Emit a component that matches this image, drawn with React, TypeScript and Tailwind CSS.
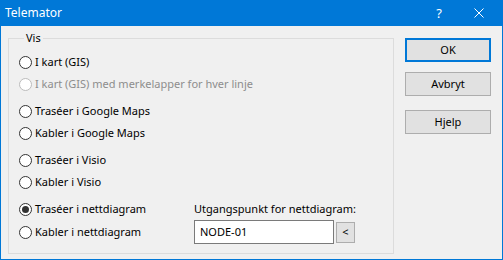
import React from "react";

// radio choices in the "Vis" group, two per block
const groups = [
  [{ label: "I kart (GIS)" }, { label: "I kart (GIS) med merkelapper for hver linje", disabled: true }],
  [{ label: "Traséer i Google Maps" }, { label: "Kabler i Google Maps" }],
  [{ label: "Traséer i Visio" }, { label: "Kabler i Visio" }],
];

function Radio({
  label,
  checked = false,
  disabled = false,
}: {
  label: string;
  checked?: boolean;
  disabled?: boolean;
}) {
  return (
    <div className="flex h-[22px] items-center gap-[3px]">
      <span
        className={`flex h-[13px] w-[13px] shrink-0 items-center justify-center rounded-full border bg-white ${
          disabled ? "border-[#bcbcbc]" : "border-[#333333]"
        }`}
      >
        {checked && <span className="h-[7px] w-[7px] rounded-full bg-[#333333]" />}
      </span>
      <span className={`whitespace-nowrap ${disabled ? "text-[#8d8d8d]" : "text-black"}`}>{label}</span>
    </div>
  );
}

function DialogButton({ label, primary = false }: { label: string; primary?: boolean }) {
  return (
    <button
      className={`flex h-[24px] w-[86px] items-center justify-center bg-[#e1e1e1] text-black ${
        primary ? "border-2 border-[#0078d7]" : "border border-[#adadad]"
      }`}
    >
      {label}
    </button>
  );
}

export default function App() {
  return (
    <div
      className="flex h-[260px] w-[503px] flex-col bg-[#0078d7] px-px pb-px text-[11px] leading-[16px]"
      style={{ fontFamily: '"Noto Sans", "Open Sans", sans-serif' }}
    >
      {/* Title bar */}
      <div className="flex h-[26px] items-center text-[12px] text-white">
        <span className="ml-[4px]">Telemator</span>
        <span className="ml-auto mr-[32px] text-[13px]">?</span>
        <svg width="10" height="10" viewBox="0 0 10 10" className="mr-[18px]">
          <path d="M0.5 0.5 L9.5 9.5 M9.5 0.5 L0.5 9.5" stroke="white" strokeWidth="1" />
        </svg>
      </div>

      {/* Body */}
      <div className="flex flex-1 gap-[11px] bg-[#f0f0f0] pl-[7px]">
        <fieldset className="mt-[4px] h-[224px] w-[386px] border border-[#dcdcdc] pl-[10px] pt-[5px]">
          <legend className="ml-[5px] px-[2px] text-black">Vis</legend>
          <div className="flex flex-col gap-[5px]">
            {groups.map((pair, i) => (
              <div key={i} className="flex flex-col">
                {pair.map((o) => (
                  <Radio key={o.label} label={o.label} disabled={"disabled" in o && o.disabled} />
                ))}
              </div>
            ))}

            <div className="flex">
              <div className="flex w-[175px] flex-col gap-[1px]">
                <Radio label="Traséer i nettdiagram" checked />
                <Radio label="Kabler i nettdiagram" />
              </div>
              <div className="flex flex-col">
                <div className="flex h-[22px] items-center whitespace-nowrap text-black">
                  Utgangspunkt for nettdiagram:
                </div>
                <div className="flex items-center gap-[2px]">
                  <div className="flex h-[24px] w-[140px] items-center border border-[#7a7a7a] bg-white pl-[5px] text-black">
                    NODE-01
                  </div>
                  <button className="flex h-[21px] w-[19px] items-center justify-center border border-[#adadad] bg-[#e1e1e1] text-black">
                    &lt;
                  </button>
                </div>
              </div>
            </div>
          </div>
        </fieldset>

        <div className="mt-[12px] flex flex-col">
          <DialogButton label="OK" primary />
          <div className="mt-[10px]">
            <DialogButton label="Avbryt" />
          </div>
          <div className="mt-[14px]">
            <DialogButton label="Hjelp" />
          </div>
        </div>
      </div>
    </div>
  );
}
